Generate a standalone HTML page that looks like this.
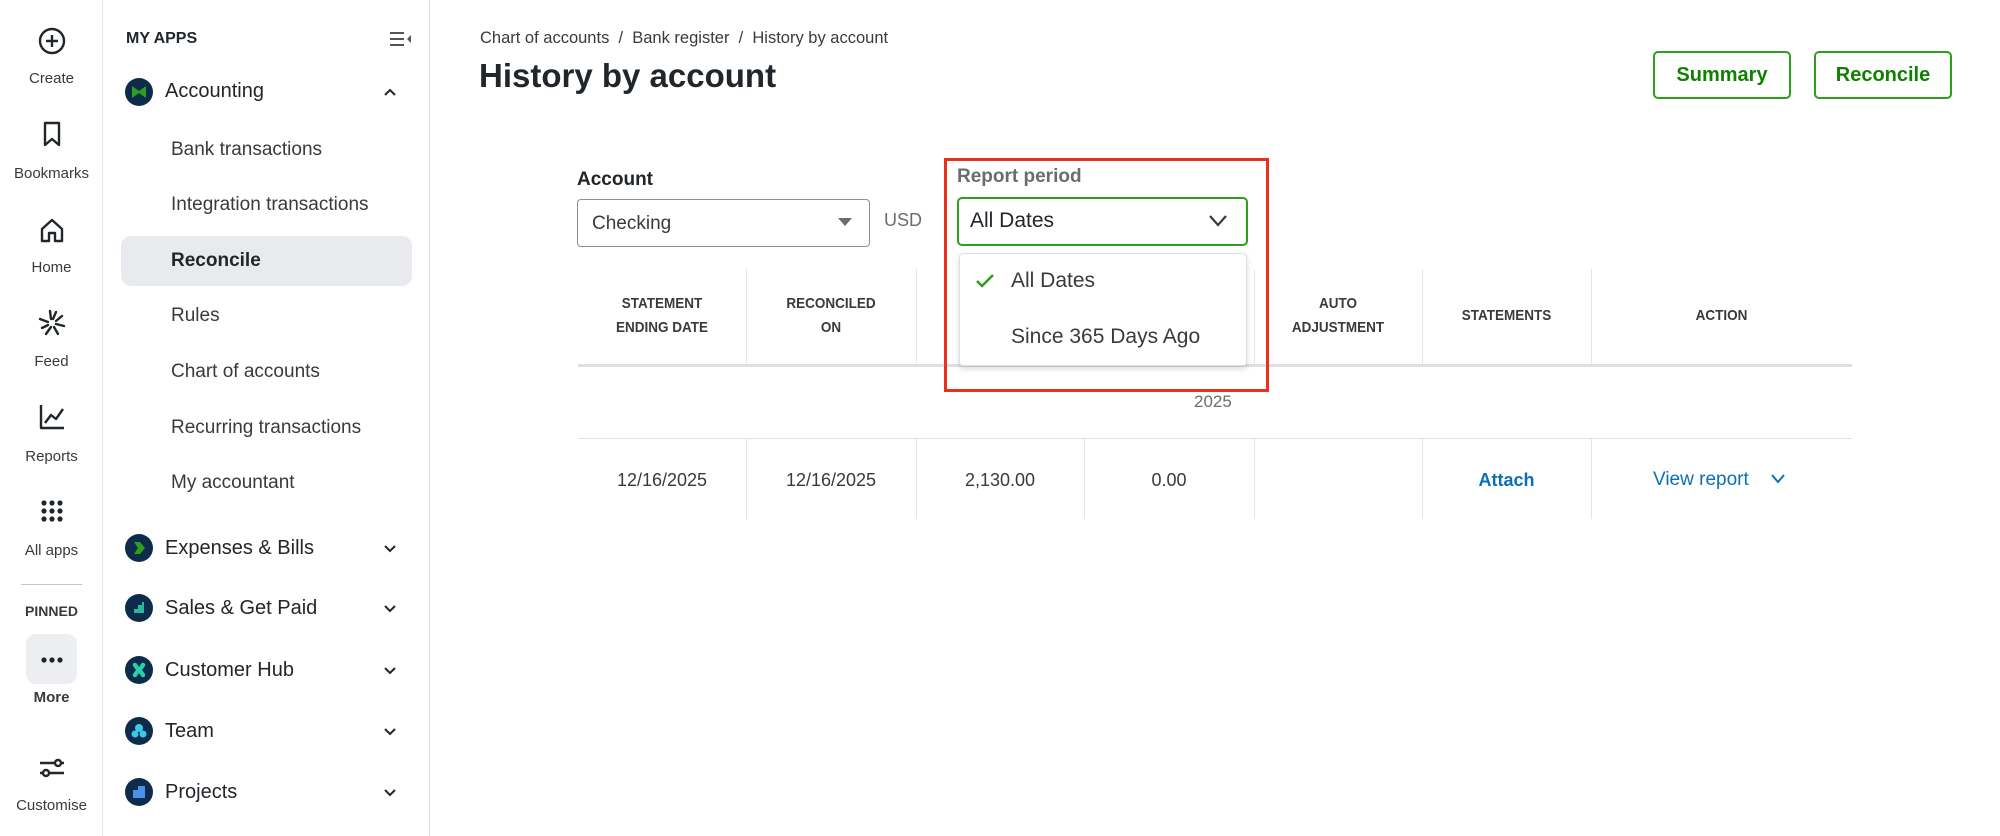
<!DOCTYPE html>
<html><head><meta charset="utf-8">
<style>
*{box-sizing:border-box;margin:0;padding:0}
body{width:2000px;height:836px;position:relative;background:#fff;font-family:"Liberation Sans",sans-serif;color:#393a3d;overflow:hidden}
.a{position:absolute;white-space:nowrap}
.rail{left:0;top:0;width:103px;height:836px;border-right:1px solid #e3e5e8}
.rl{width:103px;text-align:center;font-size:15px;color:#393a3d}
.ico{left:36px;width:32px;height:32px}
.panel{left:103px;top:0;width:327px;height:836px;border-right:1px solid #dcdfe3}
.sub{left:171px;font-size:19px;color:#393a3d}
.app{left:165px;font-size:20px;color:#21262a}
.appi{left:125px;width:28px;height:28px;border-radius:50%;background:#0d2b4a}
.chev{left:382px;width:16px;height:16px}
.th{font-size:15px;font-weight:bold;text-align:center;color:#393a3d;line-height:24px;transform:scaleX(.9)}
.vl{position:absolute;width:1px;background:#e3e5e8}
.h{top:269px;height:96px}
.d{top:439px;height:80px}
.td{font-size:18px;text-align:center;color:#393a3d}
</style></head><body>
<div class="a rail"></div>
<svg class="a ico" style="top:25px" viewBox="0 0 32 32"><circle cx="16" cy="16" r="12" fill="none" stroke="#21262a" stroke-width="2.4"/><path d="M16 10v12M10 16h12" stroke="#21262a" stroke-width="2.4"/></svg>
<div class="a rl" style="top:70px">Create</div>
<svg class="a ico" style="top:118px" viewBox="0 0 32 32"><path d="M9 5h14v22l-7-6-7 6z" fill="none" stroke="#21262a" stroke-width="2.4" stroke-linejoin="round"/></svg>
<div class="a rl" style="top:165px">Bookmarks</div>
<svg class="a ico" style="top:214px" viewBox="0 0 32 32"><path d="M6 15L16 6l10 9v12h-7v-8h-6v8H6z" fill="none" stroke="#21262a" stroke-width="2.4" stroke-linejoin="round"/></svg>
<div class="a rl" style="top:259px">Home</div>
<svg class="a ico" style="top:307px" viewBox="0 0 32 32" stroke="#21262a" stroke-width="2.4" stroke-linecap="round"><path d="M14 4l1 8M20 5l-3 7M4 12l8 3M6 21l6-3M10 27l5-7M22 27l-4-7M28 19l-8-2M26 9l-6 5"/></svg>
<div class="a rl" style="top:353px">Feed</div>
<svg class="a ico" style="top:401px" viewBox="0 0 32 32" fill="none" stroke="#21262a" stroke-width="2.4" stroke-linejoin="round"><path d="M5 4v23h23"/><path d="M9 22l6-8 5 4 7-10"/></svg>
<div class="a rl" style="top:448px">Reports</div>
<svg class="a ico" style="top:495px" viewBox="0 0 32 32" fill="#21262a"><circle cx="8" cy="8" r="2.6"/><circle cx="16" cy="8" r="2.6"/><circle cx="24" cy="8" r="2.6"/><circle cx="8" cy="16" r="2.6"/><circle cx="16" cy="16" r="2.6"/><circle cx="24" cy="16" r="2.6"/><circle cx="8" cy="24" r="2.6"/><circle cx="16" cy="24" r="2.6"/><circle cx="24" cy="24" r="2.6"/></svg>
<div class="a rl" style="top:542px">All apps</div>
<div class="a" style="left:21px;top:584px;width:61px;height:1px;background:#c4c7cc"></div>
<div class="a rl" style="top:603px;font-size:14px;font-weight:bold">PINNED</div>
<div class="a" style="left:26px;top:634px;width:51px;height:50px;border-radius:10px;background:#eceef1"></div>
<svg class="a" style="left:36px;top:644px" width="32" height="32" viewBox="0 0 32 32" fill="#21262a"><circle cx="8" cy="16" r="2.6"/><circle cx="16" cy="16" r="2.6"/><circle cx="24" cy="16" r="2.6"/></svg>
<div class="a rl" style="top:689px;font-weight:bold">More</div>
<svg class="a ico" style="top:752px" viewBox="0 0 32 32" fill="none" stroke="#21262a" stroke-width="2.4"><path d="M4 11h24M4 21h24"/><circle cx="22" cy="11" r="3" fill="#fff"/><circle cx="10" cy="21" r="3" fill="#fff"/></svg>
<div class="a rl" style="top:797px">Customise</div>

<div class="a panel"></div>
<div class="a" style="left:126px;top:30px;font-size:16px;font-weight:bold;color:#21262a">MY APPS</div>
<svg class="a" style="left:389px;top:30px" width="24" height="18" viewBox="0 0 24 18" stroke="#555" stroke-width="2"><path d="M1 3h14M1 9h14M1 15h14"/><path d="M22 5v8l-4-4z" fill="#555" stroke="none"/></svg>

<div class="a appi" style="top:78px"></div>
<svg class="a" style="left:131px;top:84px" width="16" height="16" viewBox="0 0 16 16"><path d="M1 2l7 5 7-5v12l-7-5-7 5z" fill="#2ca01c"/></svg>
<div class="a app" style="top:80px">Accounting</div>
<svg class="a chev" style="top:84px" viewBox="0 0 16 16" fill="none" stroke="#21262a" stroke-width="2"><path d="M3 11l5-5 5 5"/></svg>

<div class="a sub" style="top:139px">Bank transactions</div>
<div class="a sub" style="top:194px">Integration transactions</div>
<div class="a" style="left:121px;top:236px;width:291px;height:50px;border-radius:10px;background:#e8eaed"></div>
<div class="a sub" style="top:250px;font-weight:bold;color:#21262a">Reconcile</div>
<div class="a sub" style="top:305px">Rules</div>
<div class="a sub" style="top:361px">Chart of accounts</div>
<div class="a sub" style="top:417px">Recurring transactions</div>
<div class="a sub" style="top:472px">My accountant</div>

<div class="a appi" style="top:534px"></div><svg class="a" style="left:131px;top:540px" width="16" height="16"><path d="M3 2h6l5 6-5 6H3l4-6z" fill="#2ca01c"/></svg>
<div class="a app" style="top:537px">Expenses &amp; Bills</div>
<div class="a appi" style="top:594px"></div><svg class="a" style="left:131px;top:600px" width="16" height="16"><path d="M3 13V9h4V5h4V2h2v11z" fill="#2bb6a0"/></svg>
<div class="a app" style="top:597px">Sales &amp; Get Paid</div>
<div class="a appi" style="top:656px"></div><svg class="a" style="left:131px;top:662px" width="16" height="16"><path d="M2 4a2 2 0 014-2l2 3 2-3a2 2 0 014 2l-3 4 3 4a2 2 0 01-4 2l-2-3-2 3a2 2 0 01-4-2l3-4z" fill="#2cd0a8"/></svg>
<div class="a app" style="top:659px">Customer Hub</div>
<div class="a appi" style="top:717px"></div><svg class="a" style="left:131px;top:723px" width="16" height="16"><circle cx="8" cy="5" r="4" fill="#3dc8e8"/><circle cx="4" cy="11" r="3.5" fill="#3dc8e8"/><circle cx="12" cy="11" r="3.5" fill="#3dc8e8"/></svg>
<div class="a app" style="top:720px">Team</div>
<div class="a appi" style="top:778px"></div><svg class="a" style="left:131px;top:784px" width="16" height="16"><path d="M2 6h5V2h7v12H2z" fill="#4a8fe8"/></svg>
<div class="a app" style="top:781px">Projects</div>
<svg class="a chev" style="top:540px" viewBox="0 0 16 16" fill="none" stroke="#21262a" stroke-width="2"><path d="M3 6l5 5 5-5"/></svg>
<svg class="a chev" style="top:600px" viewBox="0 0 16 16" fill="none" stroke="#21262a" stroke-width="2"><path d="M3 6l5 5 5-5"/></svg>
<svg class="a chev" style="top:662px" viewBox="0 0 16 16" fill="none" stroke="#21262a" stroke-width="2"><path d="M3 6l5 5 5-5"/></svg>
<svg class="a chev" style="top:723px" viewBox="0 0 16 16" fill="none" stroke="#21262a" stroke-width="2"><path d="M3 6l5 5 5-5"/></svg>
<svg class="a chev" style="top:784px" viewBox="0 0 16 16" fill="none" stroke="#21262a" stroke-width="2"><path d="M3 6l5 5 5-5"/></svg>

<div class="a" style="left:480px;top:29px;font-size:16.5px;color:#393a3d">Chart of accounts &nbsp;/&nbsp; Bank register &nbsp;/&nbsp; History by account</div>
<div class="a" style="left:479px;top:57px;font-size:33px;font-weight:bold;color:#21262a">History by account</div>
<div class="a" style="left:1653px;top:51px;width:138px;height:48px;border:2px solid #2ca01c;border-radius:5px;color:#108000;font-weight:bold;font-size:20px;text-align:center;line-height:44px">Summary</div>
<div class="a" style="left:1814px;top:51px;width:138px;height:48px;border:2px solid #2ca01c;border-radius:5px;color:#108000;font-weight:bold;font-size:20px;text-align:center;line-height:44px">Reconcile</div>

<div class="a" style="left:577px;top:169px;font-size:19px;font-weight:bold;color:#21262a">Account</div>
<div class="a" style="left:577px;top:199px;width:293px;height:48px;border:1px solid #8d9096;border-radius:4px"></div>
<div class="a" style="left:592px;top:213px;font-size:19px">Checking</div>
<svg class="a" style="left:838px;top:217px" width="14" height="10"><path d="M0 1h14L7 9z" fill="#6b6c72"/></svg>
<div class="a" style="left:884px;top:210px;font-size:18px;color:#6b6c72">USD</div>

<div class="a" style="left:957px;top:166px;font-size:19px;color:#6b6c72;font-weight:bold">Report period</div>
<div class="a" style="left:957px;top:197px;width:291px;height:49px;border:2px solid #2ca01c;border-radius:5px"></div>
<div class="a" style="left:970px;top:209px;font-size:21px;color:#21262a">All Dates</div>
<svg class="a" style="left:1208px;top:214px" width="20" height="14" fill="none" stroke="#393a3d" stroke-width="2.2"><path d="M2 2l8 9 8-9"/></svg>

<div class="vl h" style="left:746px"></div><div class="vl d" style="left:746px"></div>
<div class="vl h" style="left:916px"></div><div class="vl d" style="left:916px"></div>
<div class="vl h" style="left:1084px"></div><div class="vl d" style="left:1084px"></div>
<div class="vl h" style="left:1254px"></div><div class="vl d" style="left:1254px"></div>
<div class="vl h" style="left:1422px"></div><div class="vl d" style="left:1422px"></div>
<div class="vl h" style="left:1591px"></div><div class="vl d" style="left:1591px"></div>
<div class="a" style="left:578px;top:364px;width:1274px;height:3px;background:#dcdfe3"></div>
<div class="a" style="left:578px;top:438px;width:1274px;height:1px;background:#dcdfe3"></div>
<div class="a th" style="left:578px;top:292px;width:168px">STATEMENT<br>ENDING DATE</div>
<div class="a th" style="left:746px;top:292px;width:170px">RECONCILED<br>ON</div>
<div class="a th" style="left:1254px;top:292px;width:168px">AUTO<br>ADJUSTMENT</div>
<div class="a th" style="left:1422px;top:304px;width:169px">STATEMENTS</div>
<div class="a th" style="left:1591px;top:304px;width:261px">ACTION</div>
<div class="a" style="left:1194px;top:392px;font-size:17px;color:#6b6c72">2025</div>
<div class="a td" style="left:578px;top:470px;width:168px">12/16/2025</div>
<div class="a td" style="left:746px;top:470px;width:170px">12/16/2025</div>
<div class="a td" style="left:916px;top:470px;width:168px">2,130.00</div>
<div class="a td" style="left:1084px;top:470px;width:170px">0.00</div>
<div class="a td" style="left:1422px;top:470px;width:169px;color:#0b6fb5;font-weight:bold">Attach</div>
<div class="a" style="left:1653px;top:469px;font-size:19px;color:#0b6fb5">View report</div>
<svg class="a" style="left:1771px;top:474px" width="14" height="10" fill="none" stroke="#0b6fb5" stroke-width="2"><path d="M1 1l6 7 6-7"/></svg>

<div class="a" style="left:959px;top:253px;width:288px;height:113px;background:#fff;border:1px solid #dcdfe3;border-radius:4px;box-shadow:0 3px 6px rgba(0,0,0,.15)"></div>
<svg class="a" style="left:975px;top:273px" width="20" height="16" fill="none" stroke="#2ca01c" stroke-width="2.5"><path d="M2 8l5 5 11-11"/></svg>
<div class="a" style="left:1011px;top:269px;font-size:21px;color:#393a3d">All Dates</div>
<div class="a" style="left:1011px;top:325px;font-size:21px;color:#393a3d">Since 365 Days Ago</div>

<div class="a" style="left:944px;top:158px;width:325px;height:234px;border:3px solid #e8321e"></div>
</body></html>
